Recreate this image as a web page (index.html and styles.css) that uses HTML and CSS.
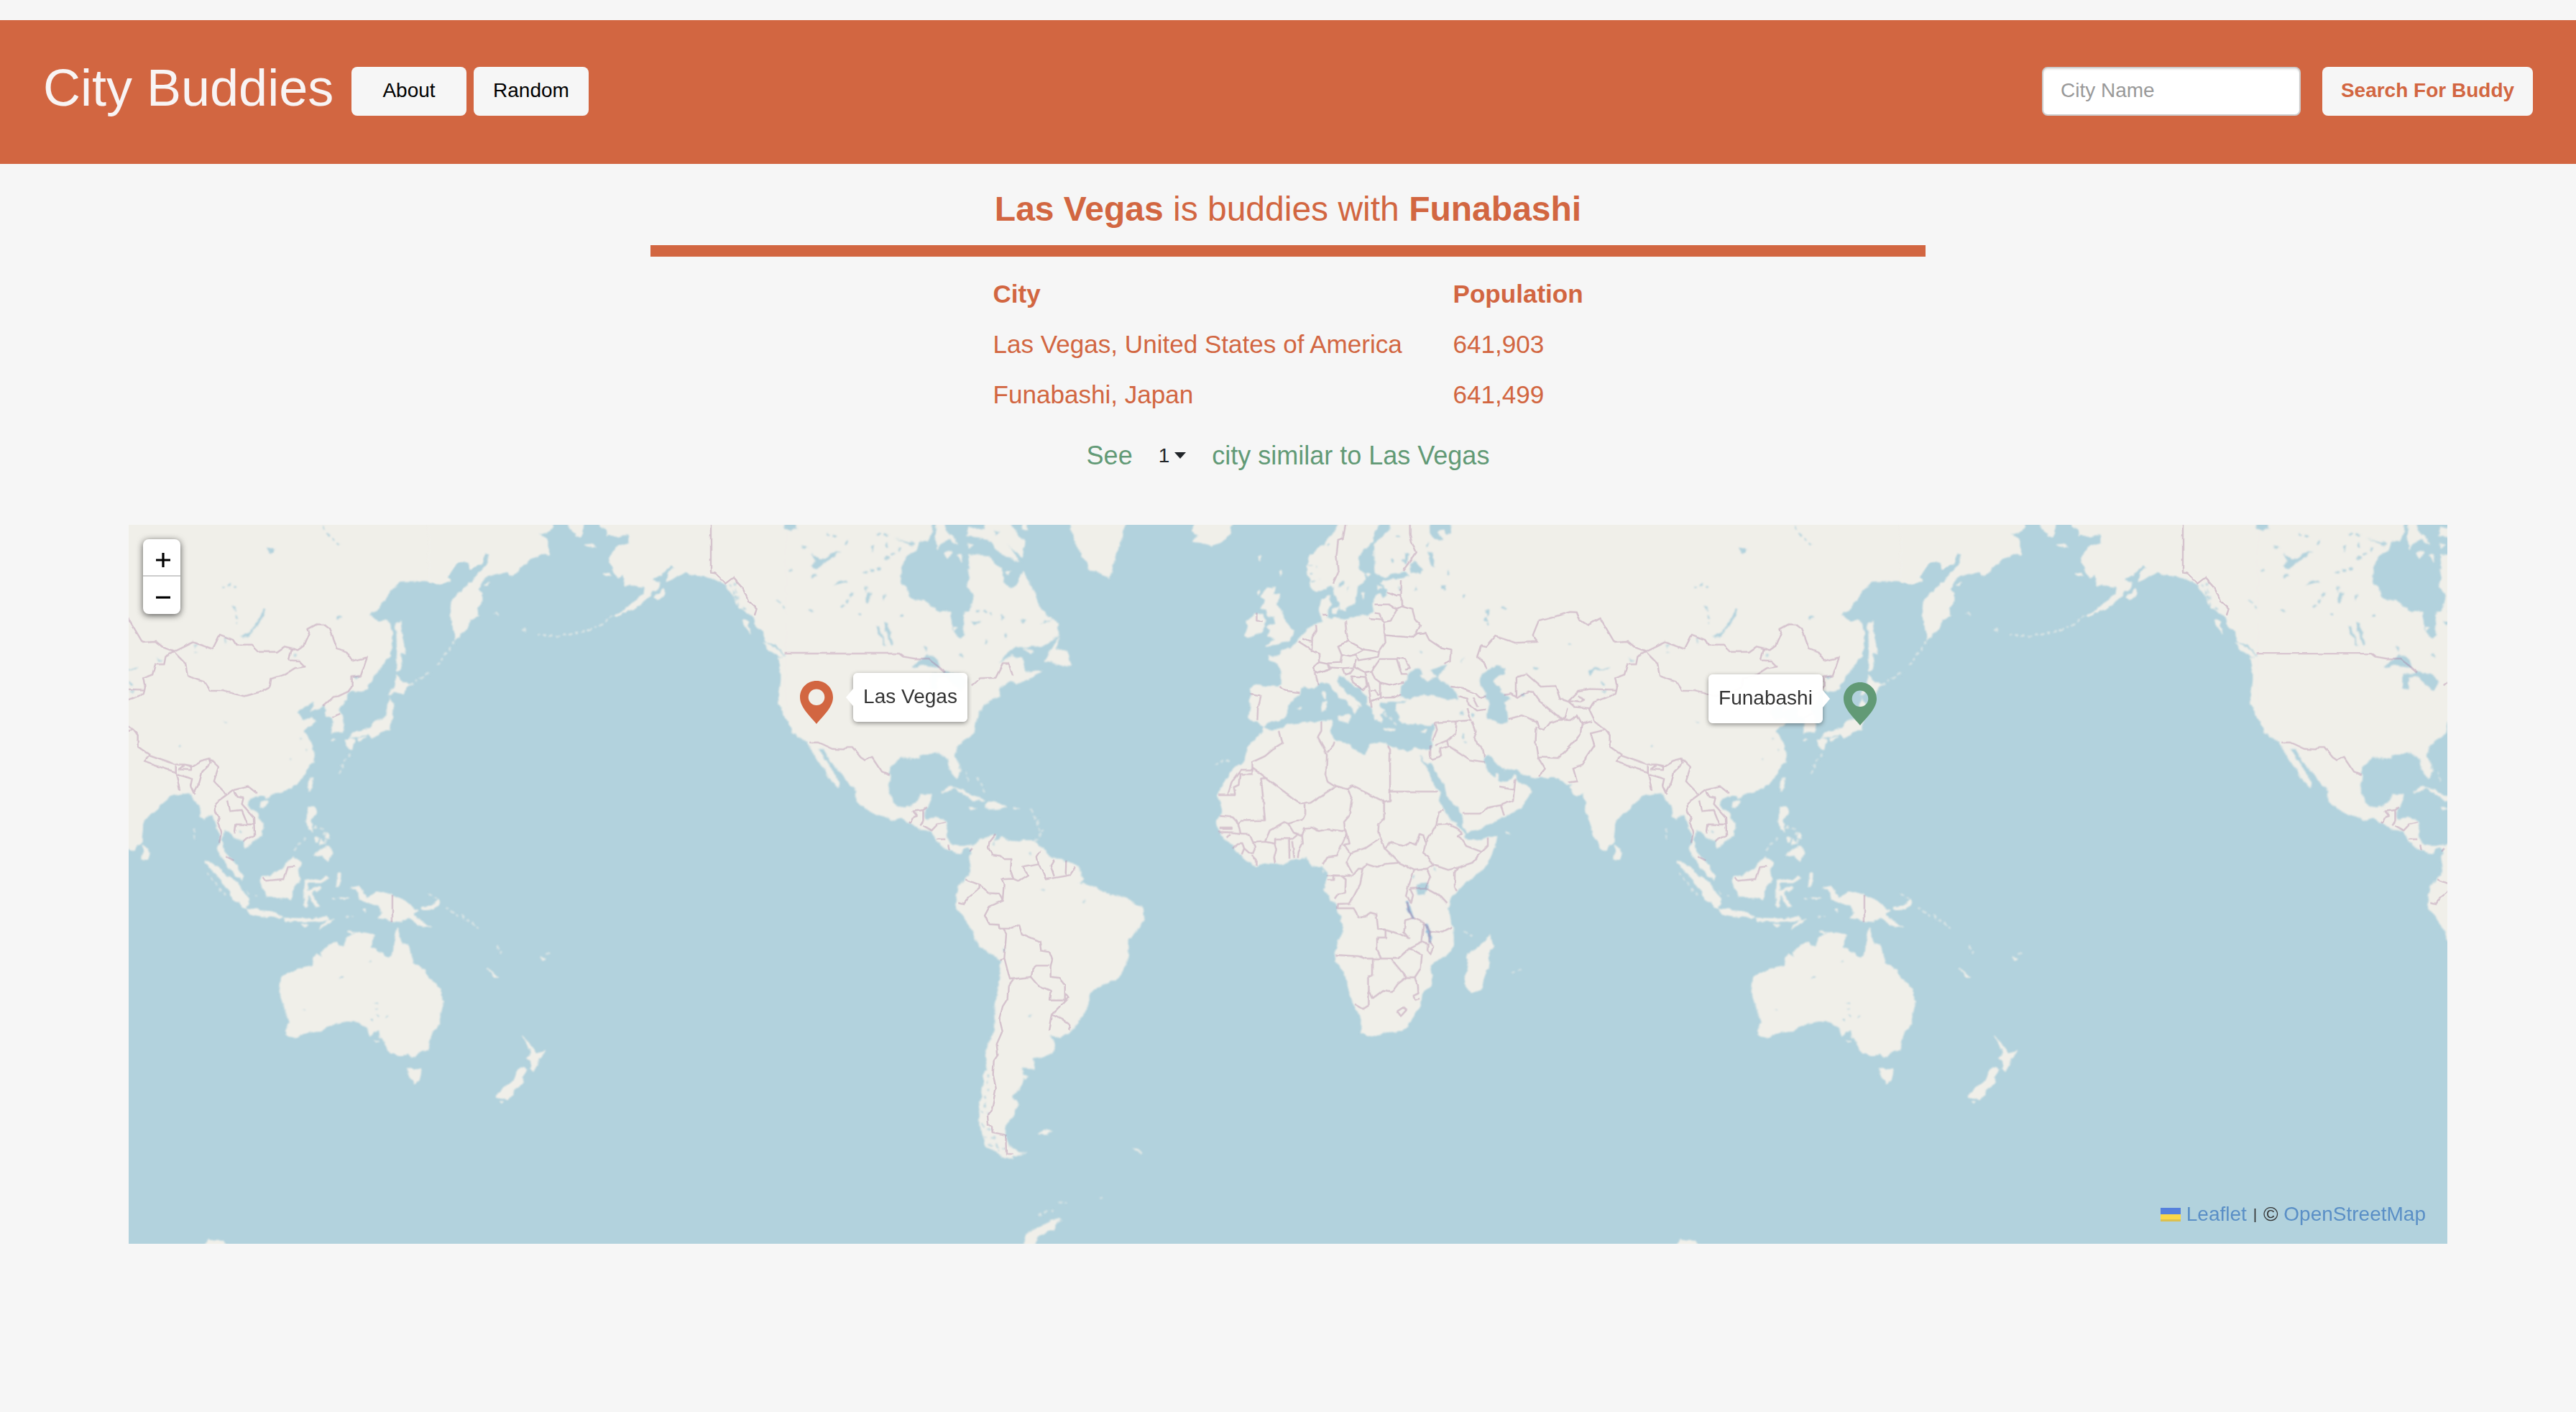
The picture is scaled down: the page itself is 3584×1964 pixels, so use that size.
FILE: index.html
```html
<!DOCTYPE html>
<html lang="en">
<head>
<meta charset="utf-8">
<title>City Buddies</title>
<link rel="stylesheet" href="styles.css">
</head>
<body>
<header class="navbar">
  <h1 class="brand">City Buddies</h1>
  <nav class="nav-buttons">
    <button class="btn">About</button>
    <button class="btn">Random</button>
  </nav>
  <form class="search">
    <input class="search-input" type="text" placeholder="City Name">
    <button class="btn btn-search" type="button">Search For Buddy</button>
  </form>
</header>
<main>
  <h2 class="headline"><b>Las Vegas</b> is buddies with <b>Funabashi</b></h2>
  <div class="rule"></div>
  <div class="cities">
    <b>City</b><b>Population</b>
    <span>Las Vegas, United States of America</span><span>641,903</span>
    <span>Funabashi, Japan</span><span>641,499</span>
  </div>
  <div class="similar">
    <span>See</span>
    <span class="count">1<svg class="caret" viewBox="0 0 16 9"><path d="M0 0H16L8 9Z"/></svg></span>
    <span>city similar to Las Vegas</span>
  </div>
  <section class="map">
    <svg class="tiles" viewBox="179 730 3226 1000">
      <defs>
        <filter id="coast" filterUnits="userSpaceOnUse" x="560" y="700" width="2300" height="1060">
          <feTurbulence type="fractalNoise" baseFrequency="0.09" numOctaves="3" seed="4"/>
          <feDisplacementMap in="SourceGraphic" scale="7" xChannelSelector="R" yChannelSelector="G"/>
          <feGaussianBlur stdDeviation="0.8"/>
        </filter>
        <filter id="line" filterUnits="userSpaceOnUse" x="560" y="700" width="2300" height="1060">
          <feTurbulence type="fractalNoise" baseFrequency="0.07" numOctaves="2" seed="9"/>
          <feDisplacementMap in="SourceGraphic" scale="4" xChannelSelector="R" yChannelSelector="G"/>
          <feGaussianBlur stdDeviation="0.5"/>
        </filter>
        <g id="world">
          <g filter="url(#coast)">
            <!-- Eastern Siberia and Alaska -->
            <g class="land" transform="translate(600 720) scale(.33333)">
              <path d="M-10 -20V262L30 275 75 262 60 250 85 215 110 180 160 180 165 215 210 185 218 150 245 152 228 200 200 230 150 290 105 325 88 350 83 400 90 450 100 510 130 480 158 440 165 420 195 410 190 375 212 360 212 315 195 300 215 250 265 235 320 225 335 245 400 185 455 148 490 158 490 130 475 85 440 65 480 68 510 45 518 -20Z"/>
              <path d="M565 -20 575 45 620 85 635 60 633 -20ZM700 -20 705 30 730 50 735 75 780 78 825 65 825 110 770 125 755 150 740 185 760 205 760 225 780 250 800 235 810 280 835 278 865 290 890 285 885 320 850 350 820 375 765 410 770 415 800 395 850 378 900 335 950 285 955 272 915 262 960 240 980 215 1000 200 1018 210 990 230 985 270 1020 250 1060 225 1110 240 1165 248 1210 270 1250 310 1280 360 1310 395 1345 410 1350 440 1385 480 1400 520 1440 530 1480 575 1445 590 1458 620 1458 690 1450 720 1452 780 1480 830 1520 900 1520 -20Z"/>
              <path d="M640 110 665 112 690 128 665 125ZM718 238 740 232 745 245ZM932 330 970 295 975 320 945 345ZM1300 428 1325 435 1322 460 1336 487 1310 455ZM1385 520 1440 545 1468 575 1455 580 1410 550ZM222 285 240 270 238 285Z"/>
              <path class="isles" d="M755 412 700 455 640 475 590 482 530 495 450 488M392 472 375 460M272 404 262 392M95 520 60 570 20 625"/>
            </g>
            <!-- North and Central America -->
            <g transform="translate(980 720) scale(.39541 .33333)">
              <g class="land">
                <path d="M290 -20V830L300 860 315 900 365 935 375 970 390 990 410 1030 440 1075 450 1105 475 1128 475 1105 450 1060 430 1020 415 1000 400 962 420 965 440 1010 480 1065 530 1130 535 1185 580 1220 620 1245 665 1260 695 1250 725 1275 755 1300 795 1305 820 1350 850 1385 870 1390 895 1402 925 1375 940 1400 960 1400 965 1385 940 1368 905 1368 870 1368 848 1330 850 1265 820 1255 775 1262 775 1230 785 1200 800 1155 765 1155 745 1190 720 1210 695 1212 665 1190 645 1140 648 1090 652 1040 690 1000 755 1003 755 990 785 983 835 985 860 1010 865 1050 890 1085 898 1055 880 990 890 950 945 900 955 840 985 780 1010 760 1040 745 1035 710 1085 680 1100 695 1130 680 1185 640 1165 640 1130 648 1120 590 1085 575 1040 610 1035 605 1060 570 1090 540 1190 535 1245 490 1245 445 1200 405 1165 350 1165 320 1150 290 1120 225 1105 280 1080 298 1050 270 1045 210 1020 195 1000 160 930 155 935 210 925 290 948 320 948 360 935 390 910 405 918 490 900 508 880 480 870 460 865 395 830 395 770 350 722 335 710 285 690 280 690 210 710 160 745 140 755 95 785 95 800 60 800 -20Z"/>
                <path d="M812 -20 815 80 820 125 840 100 865 90 890 110 880 90 850 60 850 -20ZM925 75 930 45 985 45 1000 -20 1075 -20 1085 50 1125 100 1118 165 1065 110 1108 180 1060 160 1025 130 1010 100 985 85ZM845 150 870 140 872 148 855 165ZM895 160 908 158 905 182ZM1115 -20 1140 50 1120 50ZM1280 -20 1300 80 1330 160 1360 215 1425 248 1440 180 1470 80 1485 -20ZM1245 500 1238 545 1280 570 1290 620 1250 610 1200 600 1225 545ZM1125 545 1160 560 1150 565ZM925 110 945 115 930 128Z"/>
                <path d="M838 1143 860 1125 900 1135 940 1155 985 1180 945 1182 920 1155 880 1132ZM1000 1190 1020 1185 1065 1207 1030 1215 985 1210ZM928 1210 955 1215 935 1222ZM1085 1210 1105 1213 1090 1217Z"/>
                <path class="isles" d="M920 1060 930 1100M960 1090 990 1150M1150 1220 1175 1280 1185 1320"/>
              </g>
              <g class="water">
                <path d="M728 625 750 600 780 573 815 580 830 625 790 618ZM795 655 850 645 900 650 925 690 900 720 870 690 850 660 820 665 815 720 795 715ZM375 150 410 175 440 155 482 138 470 150 430 185 395 212 375 205 392 185ZM280 50 295 -20 325 -20 325 45 300 55ZM455 285 470 265 500 260 505 268ZM630 435 645 440 662 530 655 530 640 480ZM600 450 612 450 640 535 632 530ZM565 290 572 300 565 315ZM575 310 588 315 575 360 565 350ZM625 325 638 320 630 350ZM585 125 600 120 595 145ZM770 540 785 540 780 560ZM345 115 362 125 352 130ZM670 85 740 110 735 118ZM1015 50 1035 60 1025 75ZM1065 110 1115 180 1120 190 1095 160ZM1112 425 1135 430 1120 445ZM1040 405 1055 415 1045 430ZM935 435 975 432 950 450ZM1185 445 1225 425 1195 432ZM1012 1345 1025 1355 1020 1375 1012 1365Z"/>
                <path class="lakes" d="M430 70 465 80M500 100V120M610 70 650 75M640 110V130M560 230 620 210M520 320 480 380M540 400 560 405M370 385 395 388M690 410 700 408M990 520 1000 505M900 575H905M1060 490V510M640 170 690 130M960 390 1010 400M300 220H310M380 240H390"/>
                <path class="lakes thin" d="M90 280 130 390M105 275 120 340M105 330 150 400M260 345 290 385"/>
              </g>
              <g class="land"><path d="M1060 225 1075 225 1068 240Z"/><path d="M875 455 890 462 880 468Z"/></g>
            </g>
            <!-- South America -->
            <g class="land" transform="translate(1260 1080) scale(.33333 .42092)">
              <path d="M268 262 275 238 305 212 345 200 375 188 365 210 385 212 400 203 430 212 500 215 540 215 560 232 580 245 620 275 660 278 715 295 740 340 725 355 765 360 800 370 835 390 910 397 940 412 960 425 990 432 998 465 980 490 960 510 930 540 928 590 910 640 880 672 830 680 765 715 765 750 730 800 710 820 680 850 640 860 598 848 625 885 610 915 575 928 535 928 530 965 485 962 490 1000 475 1035 440 1055 470 1085 455 1105 440 1130 415 1150 415 1190 440 1225 485 1248 440 1250 445 1265 400 1255 340 1220 310 1160 305 1100 320 1040 330 980 345 970 338 900 355 870 370 840 375 760 390 690 398 610 360 585 300 555 280 510 240 455 208 435 212 405 220 360 265 325 275 290Z"/>
              <path d="M555 1183 580 1170 605 1172 590 1182ZM950 1228 965 1230 982 1245ZM498 1580 500 1510 530 1500 560 1490 610 1468 650 1468 620 1480 620 1500 590 1500 545 1525 530 1580ZM490 990 508 992 500 1000Z"/>
              <path class="isles" d="M555 1450 610 1432M640 1408H670M810 1392H825M490 1246 505 1244M545 215 575 175"/>
              <path class="lakes thin" d="M345 985 345 1050M325 1060 335 1100M315 1110 345 1115M320 1150 350 1165M330 1190 370 1200M350 1215 410 1230M370 1190 390 1240M515 790H528M405 572 410 578M370 215V225M518 255H521M568 378H575M745 412H748"/>
            </g>
            <!-- Europe, Middle East, west Asia -->
            <g transform="translate(1660 720) scale(.33333)">
              <g class="land">
                <path d="M620 -20 605 30 580 75 545 115 520 130 485 165 478 200 480 240 490 260 490 285 520 308 545 300 575 275 585 290 590 325 605 345 612 385 635 388 640 370 670 360 680 330 685 295 715 260 715 240 690 215 688 170 715 130 750 100 758 60 775 30 780 -20 825 -20 822 50 800 70 755 115 757 200 765 235 790 245 850 232 880 222 908 240 870 255 830 258 795 262 785 275 805 295 808 325 795 340 780 320 760 328 750 360 755 395 735 412 700 405 640 428 600 422 560 425 555 400 575 365 572 325 535 345 532 395 545 435 505 445 475 470 460 495 435 512 410 540 365 555 362 575 315 578 320 592 355 610 370 650 370 700 355 707 255 700 238 712 243 735 240 790 232 840 245 850 270 848 295 872 315 855 355 852 385 830 395 815 390 785 425 750 445 735 450 705 485 712 520 700 540 685 565 695 585 725 630 760 665 790 672 820 690 790 675 775 705 785 700 775 645 735 615 705 600 680 610 655 640 665 660 690 700 720 725 745 725 775 745 800 760 820 760 845 790 855 795 845 775 820 800 810 775 790 780 770 830 765 855 768 885 760 845 780 850 810 860 840 900 860 935 862 985 868 1010 855 1010 880 1000 915 990 960 985 1015 1010 1055 1050 1110 1062 1175 1100 1200 1125 1240 1130 1280 1140 1310 1180 1305 1230 1285 1290 1250 1340 1230 1380 1195 1412 1140 1395 1120 1355 1105 1350 1080 1342 1078 1320 1102 1285 1105 1275 1095 1265 1065 1258 1090 1235 1060 1210 1015 1217 990 1240 988 1265 1020 1300 1052 1355 1052 1380 1072 1440 1085 1520 1083 1520 -20Z"/>
                <path d="M310 295 340 290 330 320 362 322 345 360 365 385 390 440 420 470 415 495 395 518 350 525 305 538 345 505 305 490 325 470 310 455 345 445 340 415 315 410 310 380 285 375 300 345 288 330ZM255 405 290 400 297 430 285 480 235 500 218 488 230 460 222 430 245 420ZM15 -20 160 -20 155 65 120 100 75 120 40 105 5 100 20 70 0 60ZM540 725 555 730 550 755 540 745ZM535 770 558 765 555 800 538 808ZM605 832 655 822 650 855 615 840ZM795 880 840 886 835 891 800 886ZM945 890 972 883 965 897ZM703 320 715 318 707 338ZM580 385 605 375 600 400 585 400ZM270 165 280 162 275 180ZM365 225 375 220 370 240ZM435 795 448 788 445 800ZM725 235 740 235 732 243ZM770 285 785 290 772 302ZM272 310 280 300 275 325Z"/>
                <path class="isles" d="M90 1025 160 1015M800 820 850 860"/>
              </g>
              <g class="water">
                <path d="M985 -20 1075 -20 1080 65 1060 75 1040 50 1018 55 1040 90 1025 100 1000 88 988 60ZM895 660 910 645 925 630 950 635 962 655 950 660 975 682 1000 670 1020 665 1060 695 1100 725 1105 750 1070 762 1010 745 970 740 930 745 900 757 868 745 870 705 890 680ZM985 640 1000 632 1062 615 1040 645 1025 668 1010 655ZM1235 635 1270 618 1298 625 1295 650 1270 665 1252 685 1280 705 1290 730 1325 760 1295 770 1310 800 1315 840 1300 858 1270 858 1228 835 1228 815 1238 780 1215 730 1195 680 1205 655ZM910 185 930 185 955 215 945 238 910 230ZM982 140 1000 150 1012 205 990 195 985 170ZM1035 275 1055 285 1050 305 1035 295ZM605 275 630 265 632 280 610 295ZM640 290 650 285 640 308ZM860 280 866 300 860 305ZM855 768 890 762 885 772 860 775ZM885 150 900 150 890 195 870 180 885 175ZM1115 600 1135 585 1120 605ZM940 555 960 562 950 566ZM1415 630 1440 628 1430 638Z"/>
                <path class="lakes" d="M830 175V195M848 78 860 85M980 105 970 125M1230 390 1220 430 1235 445M1060 225 1065 250M925 298H928M1130 325V335M1120 812 1130 818M1130 905 1140 935M1165 820 1170 840M1380 740 1370 750M935 1140 955 1115M1290 375H1300"/>
                <path class="lakes thin" d="M485 195 515 205M490 235 515 230M495 265 525 255M560 115 580 100"/>
              </g>
            </g>
            <!-- Africa -->
            <g transform="translate(1660 1000) scale(.33333)">
              <path class="land" d="M295 35 320 48 362 45 400 20 480 12 535 10 575 5 580 25 570 55 590 90 620 95 655 110 665 130 725 148 740 110 770 95 810 110 850 125 890 135 930 122 975 130 992 130 988 180 980 192 975 200 1000 270 1025 300 1030 345 1050 380 1065 420 1100 440 1135 480 1130 495 1150 508 1180 510 1230 495 1268 487 1260 530 1230 600 1180 650 1130 690 1100 720 1075 750 1060 790 1070 830 1085 875 1087 945 1070 975 1030 1000 990 1035 1000 1080 997 1110 955 1140 950 1190 920 1240 885 1290 850 1305 800 1310 735 1325 705 1305 705 1255 675 1190 655 1150 640 1080 600 1010 595 980 605 930 628 890 620 830 600 780 545 710 560 680 560 640 540 612 495 615 475 580 430 585 390 600 345 605 300 603 265 612 230 595 185 555 155 520 110 480 100 435 120 390 115 340 105 315 130 265 165 210 215 175 230 120 260 85 285 65ZM1235 900 1245 925 1252 950 1240 965 1235 1020 1215 1075 1200 1130 1165 1142 1140 1125 1133 1075 1150 1030 1145 980 1180 960 1215 930ZM1305 474 1320 476 1308 480Z"/>
              <path class="isles" d="M1335 1060 1375 1043M1135 890 1162 905M540 632V640"/>
              <path class="water" d="M945 155 952 155 985 195 980 205ZM935 695 970 685 985 695 960 735 935 730ZM915 655 925 650 918 668ZM1005 615 1018 640 1005 630Z"/>
              <path class="deep" d="M893 765 900 800 918 830M975 860 985 900 990 930"/>
            </g>
            <!-- Central Asia, India -->
            <g transform="translate(2060 720) scale(.40816 .33333)">
              <path class="land" d="M200 -20V1083L265 1082 290 1110 320 1110 302 1125 330 1165 355 1145 358 1200 385 1320 410 1380 425 1392 455 1350 460 1260 480 1240V-20Z"/>
              <path class="water" d="M365 640 385 628 440 626 442 632 390 635 372 660ZM405 728 430 725 425 735ZM500 580 520 595 510 600ZM730 848 745 850 738 858ZM470 630 485 645 478 645Z"/>
              <path class="lakes" d="M180 628 190 635M20 395 25 440M415 690 425 700M300 530H305M140 740H145M585 955 605 980M550 740H555"/>
            </g>
            <!-- East Asia -->
            <g transform="translate(2226 720) scale(.34439 .33333)">
              <g class="land">
                <path d="M40 -20V1330L60 1310 60 1260 110 1225 140 1190 175 1160 245 1145 265 1170 290 1205 295 1250 310 1257 340 1235 355 1280 375 1320 370 1360 360 1385 390 1430 405 1460 430 1490 462 1510 455 1480 440 1450 405 1420 380 1380 375 1345 390 1300 410 1310 430 1335 470 1350 470 1385 500 1350 540 1330 543 1280 520 1235 485 1205 490 1180 515 1155 555 1160 560 1175 590 1150 660 1130 705 1085 715 1055 745 1020 752 975 735 935 707 890 755 848 740 840 705 840 682 812 690 800 750 765 752 775 740 805 790 787 805 800 802 825 825 830 830 855 820 900 870 890 875 860 860 820 850 795 880 765 885 735 905 720 935 720 965 710 1010 640 1055 580 1070 490 1065 450 1040 425 1010 435 975 405 1000 390 1060 310 1095 265 1200 262 1250 275 1298 265 1285 250 1330 185 1375 180 1385 215 1430 185 1440 150 1440 -20Z"/>
                <path d="M745 1085 735 1143 722 1115ZM535 1190 568 1182 550 1210 532 1205ZM62 1365 88 1400 80 1425 58 1425ZM1085 655 1110 690 1138 700 1110 735 1075 725 1055 740 1060 715 1080 705ZM1060 755 1080 790 1065 830 1058 885 1035 885 985 920 975 905 930 910 895 920 920 890 975 880 1000 850 1045 830 1050 780ZM925 920 960 915 930 935ZM880 925 915 925 905 965 890 960ZM1085 440 1100 430 1108 500 1120 568 1098 560 1105 630 1085 640 1088 560ZM825 922 835 925 826 928Z"/>
              </g>
              <path class="isles" d="M1140 700 1220 645M895 985 850 1065M270 1300 265 1350"/>
              <path class="water" d="M543 380 553 382 548 420 510 465 480 500 452 498 490 480 535 420ZM385 848 402 855 392 858ZM392 505 402 500 395 525ZM262 530 278 530 270 542ZM845 415 865 410 848 430ZM112 582 135 598 120 598ZM415 370 435 375 425 385ZM910 662 935 662 922 675ZM670 570 680 565 675 580ZM560 120 595 130 575 155Z"/>
              <path class="lakes thin" d="M787 -20V40L815 75 860 115M380 290 415 278 437 290M435 380 440 440M695 925V928M655 1010V1012M720 965V968M205 957H210M450 1305 460 1310M270 560H280"/>
            </g>
            <!-- South-east Asia and Oceania -->
            <g transform="translate(2320 1100) scale(.35714 .33333)">
              <g class="land">
                <path d="M35 295 80 310 130 360 170 390 205 450 203 488 185 485 160 460 120 400 80 345ZM205 492 250 500 300 505 340 530 270 525 210 512ZM255 360 290 360 340 320 380 272 413 298 395 330 408 370 385 400 370 455 320 440 275 440 260 400ZM605 405 640 398 655 415 655 430 670 450 710 418 765 435 820 460 845 490 870 500 850 510 880 545 915 570 870 560 830 525 800 548 765 545 715 530 730 510 715 485 670 465 640 455 635 425ZM440 68 465 70 468 100 450 125 455 175 432 130ZM465 270 490 245 520 230 533 265 515 290 490 265ZM465 195 480 200 470 215ZM510 180 518 200 505 195ZM490 200 500 215 480 225Z"/>
                <path d="M785 575 805 635 825 640 850 720 890 745 905 785 920 790 955 830 963 900 950 960 920 1020 905 1083 875 1088 850 1112 825 1095 805 1108 750 1090 740 1045 720 1030 715 990 680 1022 670 990 650 970 610 958 540 970 510 980 490 1003 440 1005 395 1030 370 1025 350 1010 362 970 340 870 328 840 335 780 380 750 450 730 475 680 490 690 505 655 545 630 555 648 580 648 590 620 605 600 635 590 695 600 680 648 755 697 772 670 775 610ZM822 1155 850 1162 880 1158 870 1210 855 1220 838 1200ZM1272 1020 1300 1055 1312 1075 1330 1095 1360 1085 1340 1120 1315 1168 1303 1160 1305 1130 1290 1120 1308 1100 1300 1070ZM1265 1152 1292 1165 1272 1195 1272 1218 1240 1250 1220 1290 1172 1278 1185 1255 1215 1225 1245 1195ZM695 1043 715 1045 705 1048ZM595 585 620 588 600 592ZM1345 695 1362 698 1352 706ZM1135 742 1178 778 1170 778ZM485 572 505 548 540 537 505 560ZM415 553 440 560 425 562ZM530 445 545 450ZM560 443 600 447 580 450ZM655 490 663 490 658 505ZM1188 1295 1195 1300 1190 1303Z"/>
                <path class="island-line" d="M510 365 490 378 435 378 430 400 430 480M435 430 480 405M445 430 475 480M885 490 920 490 945 465M350 537 440 539 510 535M560 350 555 400"/>
                <path class="isles" d="M45 345 115 440M205 420 215 440M235 438H240M385 245 425 200M465 150 500 160M510 240 500 170M980 485 1020 525M1040 520 1100 575M910 430 950 460M1175 650 1190 675M1365 680 1385 673M590 525 615 520"/>
              </g>
              <path class="lakes thin" d="M565 783H575M700 888H706M706 910H710M710 938H712M685 960H688M678 715H680M420 911H422M745 938H748"/>
            </g>
            <path class="land" d="M2326 1740 2338 1726 2346 1730 2358 1727 2370 1740Z"/>
          </g>
          <g class="border" filter="url(#line)">
            <g transform="translate(600 720) scale(.33333)"><path d="M1167 -20V230L1185 232 1228 275 1260 250 1300 295 1325 350 1358 378 1350 405"/></g>
            <g transform="translate(980 720) scale(.39541 .33333)"><path d="M285 567H685L700 580 740 588 790 588 830 625 850 645M940 700 970 670 1025 668 1050 610 1072 610 1085 660M370 938 400 938 450 965 490 967 500 957 520 957 550 1000 565 1012 590 998 625 1060 652 1072M722 1278 735 1250 748 1245 735 1225 770 1220 770 1265 760 1285M770 1220 783 1208M770 1285 800 1305 820 1280 850 1272M820 1342H848M858 1365 862 1385M933 1392 943 1380"/></g>
            <g transform="translate(1260 1080) scale(.33333 .42092)"><path d="M375 190 350 215 345 235 360 258 395 262 410 273 442 273 438 310 450 338 400 340 410 355 405 410M450 338 470 345 510 325 490 300 555 290 548 265 565 245M555 290 570 310 585 340 690 325 710 300M620 275 605 295 620 330M670 278 668 325M250 340 305 357 345 385 390 387 405 410 350 430 330 460 350 488 388 490 392 505 430 505 475 490 485 520 560 545 565 575 600 580 612 605 605 630 605 662 640 665 665 690 665 740 600 740 605 708 555 690 525 662 530 635 545 625 600 625M305 357V370L260 400 245 420 220 415M408 505 420 520 412 600 395 605M412 600 435 670 495 665 525 662M450 672 428 695 425 735 405 760 390 805 402 845 380 885 385 920 368 940 365 985 377 1030 360 1100 342 1120 345 1150 360 1155 362 1178 418 1187 420 1247 450 1248M665 715 680 730 612 785 600 840M612 785 650 800 688 822 680 838"/></g>
            <g transform="translate(1660 720) scale(.33333)"><path d="M645 -20 625 90 605 95 598 160 605 230 585 275M905 -20V70L912 100 932 145 875 222M870 258 868 325 870 370M812 310 850 325 868 325M757 362 820 362 850 380 870 370 915 383 925 420 948 450 932 480M850 380 825 430 795 435 780 400 758 398M735 420 795 425M795 435 800 490 850 495 915 500 935 483 970 480 985 510 1030 540 1078 550 1075 600 1045 612M635 432 640 480 648 515 715 550 775 560 803 520 800 490M648 515 605 535 620 570 655 577 680 570 715 550M680 570 690 595 775 580 780 555M513 445 515 470 497 500 495 555 525 568 525 605M438 515 495 552M455 505 497 520M500 625 525 603 560 610 570 630 515 648ZM560 608 615 605 620 570M570 625 625 628 670 625 680 590M510 648 522 698M625 628 635 655 655 650 670 630M358 705 385 722 445 730M240 735 283 742 270 800 268 845M675 600V625L715 645 745 640 780 590 850 590 870 655 895 655M850 585 885 590 905 630 885 635M780 690 820 700 880 685M745 640 760 675 780 690 780 752M660 662 720 665 725 700 710 720 670 690ZM715 645 735 720 745 790M780 752 840 750 870 735M745 765 785 750M740 720 760 720 775 740M1075 705 1120 710 1180 735 1195 750 1222 745M1108 745 1145 755 1150 780 1185 805 1222 800M1170 750 1190 790M1145 795 1160 850M540 405H560M265 400V430L290 432"/></g>
            <g transform="translate(1660 1000) scale(.33333)"><path d="M360 50 373 103 330 130 300 155 247 180V230H195L190 275 170 285 175 315H105M247 212H200L160 265 145 313M247 205 450 355 490 350 597 280M310 248H283L288 290 300 423 200 425 188 435 165 410 115 405M188 435 198 478M105 472 160 473 200 478 235 480 250 515M110 453H158V459H110M155 480 140 495M168 540 185 520 205 518 213 540 203 565M213 540 235 560 250 560 258 540 250 515M245 570 265 590V612M250 515 300 512 340 520 347 545 338 580 342 602M300 512 320 465 380 430 397 437 420 475 440 480 415 500H342V520M400 500 402 580M413 510 422 580M455 490 458 520 440 555 437 580M468 357V395L455 420 397 437M420 475 455 490 465 455 495 453 525 468 560 460 620 468 635 460M597 280 645 293 665 335 655 400 630 430 635 470M535 10V50L520 75 548 125 558 150 555 235 565 260 597 280M590 95 585 110 560 140M645 293 665 280 797 345 822 340V130L812 115M822 303H1022M797 345V418L775 440 772 470 800 540M640 480 600 570 560 575 540 608M635 460 650 520 630 525 655 560 640 600 665 645M655 560 715 540 775 500M800 540 860 600M800 540 820 515 880 530 910 515 930 525 945 480 960 485 970 520 960 555 1005 610M560 652 665 655 690 625 710 625 725 605 770 620 800 605 860 600 920 628 975 625 1005 610 1065 630 1105 620 1165 600 1205 555 1230 530V495M1120 500 1140 530 1205 555M970 520 1015 440 1025 390 1048 380M1015 440 1060 437 1100 455 1125 480 1105 490 1120 500M1105 620 1092 640V700L1100 718M905 708 970 705 1035 740 1060 768M975 625 990 660 970 705M920 628 900 690 888 740 910 765 918 735 905 708M893 765 900 800 918 830 885 840 880 890 900 915 870 900 800 880 770 878M918 830 965 850 955 930M965 850 985 885 1040 890 1080 870M985 885V930L1002 950 990 980 978 965 980 940 955 930 905 955M620 655 637 670 635 725 605 730 590 750M560 672H585V655M710 625 697 690 670 740 650 770 605 772 603 790H670L690 825 720 822 740 808 765 815 772 878H803V912H768V965L785 1000M595 985 690 990 720 1000H855L905 955 955 985 950 1040 925 1078H890L825 1000M750 1000V1070H733V1195L710 1210 675 1190M733 1130 750 1165 790 1135 830 1140 855 1105 890 1078M925 1078 938 1110 940 1145 920 1155 925 1175 945 1170M855 1220 880 1203 893 1215 870 1240ZM1010 15 1100 10 1160 5M1100 10 1095 60 1060 90 1010 110M1010 15 1018 45 1000 90M1060 90 1065 110 1155 170 1215 180M1065 115 1030 125 1035 155 1000 167 985 160M990 110V165M1165 10 1180 50 1170 80 1210 130 1215 160M1125 395 1200 395 1230 370 1285 360 1335 340 1340 295 1280 285M1285 360 1298 400M1340 295 1345 250"/></g>
            <g transform="translate(2060 720) scale(.40816 .33333)"><path d="M20 632 12 605 -12 580 0 535 18 540 50 495 118 522 195 518 178 490 197 432 250 415 305 393 325 395 335 425 365 448 408 420 455 518 500 515 530 545 563 560 630 520 695 548 720 488 765 510 775 530 830 530 855 560 915 560 940 538 965 545 955 595 990 597 1010 622 975 628 940 655 895 672 890 705 860 725 803 745 730 723 685 722 665 685 610 660 603 610 563 560M965 545 985 553 1005 535 1025 480 1020 465 1050 445 1075 446 1095 465 1120 545 1150 560 1170 598 1222 583 1200 660 1170 665V705L1158 725 1124 745 1107 748 1073 785M1103 832 1130 818M563 560 535 580 530 612 500 612 490 655 458 670 465 705 460 735 385 770 370 800 390 850 425 885 440 910V955L480 990 570 1030 600 1030 622 1040 655 1015 685 1005 690 1025 660 1060 650 1105 630 1150M460 718 370 715 335 722 300 765 340 770 355 760 330 745M122 752V665L158 655 205 705 255 702 270 755 300 768 320 790 370 795M80 740 105 735 125 752 160 725 180 728 205 770 270 835 285 840 295 795M95 840 140 825 190 850 200 880 215 885 235 855 270 843 305 845 330 825 345 860 380 850M190 870 187 940 195 1000 265 1003 305 955 340 900 345 860M195 1000 220 1050 200 1080M425 885 375 900 388 950 345 1030 315 1045 328 1100 300 1105M480 990 460 1018 570 1062V1035M580 1050 600 1030 622 1035V1053ZM570 1062 575 1090 583 1140M575 1070 625 1090 620 1120 633 1155M690 1010 715 1040 700 1100 735 1145 745 1155 705 1190V1225L718 1250 712 1270 725 1310 718 1360M745 1155 765 1135 780 1165 800 1170 795 1195 835 1250 838 1325 800 1350M745 1180 752 1225 795 1220 815 1280H835M815 1283H775L770 1320M765 1135 815 1120 845 1150M740 1415 765 1430"/></g>
            <g transform="translate(2320 1100) scale(.35714 .33333)"><path d="M265 360 275 375 345 368 360 318 390 315M767 435V545"/></g>
          </g>
        </g>
      </defs>
      <use href="#world" x="-2048"/>
      <use href="#world"/>
      <use href="#world" x="2048"/>
    </svg>
    <div class="zoom-control">
      <a class="zoom-btn"><svg viewBox="0 0 20 20"><path d="M0 10H20M10 0V20"/></svg></a>
      <a class="zoom-btn"><svg viewBox="0 0 20 20"><path d="M0 10H20"/></svg></a>
    </div>
    <svg class="pin pin-vegas" viewBox="0 0 46 60"><path fill-rule="evenodd" d="M23 0C10 0 0 10 0 23C0 37 15 50 23 60C31 50 46 37 46 23C46 10 36 0 23 0ZM23 11.500A11.300 11.300 0 1 1 23 34.100A11.300 11.300 0 1 1 23 11.500Z"/></svg>
    <div class="tooltip tip-left">Las Vegas</div>
    <svg class="pin pin-funabashi" viewBox="0 0 46 60"><path fill-rule="evenodd" d="M23 0C10 0 0 10 0 23C0 37 15 50 23 60C31 50 46 37 46 23C46 10 36 0 23 0ZM23 11.500A11.300 11.300 0 1 1 23 34.100A11.300 11.300 0 1 1 23 11.500Z"/></svg>
    <div class="tooltip tip-right">Funabashi</div>
    <div class="attribution">
      <svg class="flag" viewBox="0 0 28 19"><path fill="#5580dc" d="M0 0H28V9H0Z"/><path fill="#fad749" d="M0 9H28V16H0Z"/><path fill="#dcc04f" d="M0 16H28V19H0Z"/></svg>
      <a>Leaflet</a> <span class="bar">|</span> © <a>OpenStreetMap</a>
    </div>
  </section>
</main>
</body>
</html>
```
FILE: styles.css
```css
* { box-sizing: border-box; }
body {
  margin: 0;
  background: #f6f6f6;
  font-family: "Liberation Sans", Arial, sans-serif;
  font-size: 28px;
}
.navbar {
  display: flex;
  align-items: flex-start;
  height: 200px;
  margin-top: 28px;
  padding: 65px 60px 0;
  background: #d26641;
}
.brand {
  width: 429px;
  margin: -7px 0 0;
  font-size: 72px;
  font-weight: 400;
  line-height: 72px;
  color: #f8f4f4;
  white-space: nowrap;
}
.nav-buttons { display: flex; gap: 10px; }
.btn {
  width: 160px;
  height: 68px;
  padding: 0 0 3px;
  border: 0;
  border-radius: 8px;
  background: #f6f6f6;
  font: 28px "Liberation Sans", Arial, sans-serif;
  color: #000;
}
.search { display: flex; gap: 30px; margin-left: auto; }
.search-input {
  width: 360px;
  height: 68px;
  padding: 0 24px 3px;
  border: 2px solid #ccc;
  border-radius: 8px;
  background: #fff;
  box-shadow: inset 0 2px 2px rgba(0, 0, 0, .075);
  font: 28px "Liberation Sans", Arial, sans-serif;
}
.search-input::placeholder { color: #999; opacity: 1; }
.btn-search { width: 293px; font-weight: 700; color: #d26641; }
.headline {
  margin: 36px 0 24px;
  font-size: 48px;
  font-weight: 400;
  line-height: 53px;
  text-align: center;
  color: #d26641;
}
.rule { width: 1774px; height: 16px; margin: 0 auto 17px; background: #d26641; }
.cities {
  display: grid;
  grid-template-columns: 640px 181px;
  justify-content: center;
  font-size: 35.1px;
  line-height: 70px;
  color: #d26641;
}
.similar {
  display: flex;
  justify-content: center;
  gap: 36px;
  margin: 15px 0 61px;
  font-size: 36px;
  line-height: 70px;
  color: #629a76;
}
.count {
  display: flex;
  align-items: center;
  gap: 7px;
  font-size: 28px;
  line-height: 68px;
  color: #212529;
}
.caret { width: 16px; height: 9px; margin-top: -2px; fill: #212529; }
.map {
  position: relative;
  width: 3226px;
  height: 1000px;
  margin: 0 auto;
  overflow: hidden;
  background: #b2d2dd;
}
.tiles { display: block; width: 3226px; height: 1000px; }
.land { fill: #f0efe9; }
.land path:not([class]), path.land { stroke: #f0efe9; stroke-width: 4px; stroke-linejoin: round; }
.water { fill: #b2d2dd; }
.isles, .island-line, .lakes, .deep { fill: none; stroke-linecap: round; vector-effect: non-scaling-stroke; }
.isles { stroke: #dbe5e5; stroke-width: 2.5; stroke-dasharray: 3 6; }
.island-line { stroke: #f0efe9; stroke-width: 5; }
.lakes { stroke: #b2d2dd; stroke-width: 3; stroke-dasharray: 3 7; }
.thin { stroke-width: 2; }
.deep { stroke: #94b9d8; stroke-width: 4; }
.border path {
  fill: none;
  stroke: #a878a0;
  stroke-opacity: .38;
  stroke-width: 2.4;
  stroke-linejoin: round;
  vector-effect: non-scaling-stroke;
}
.zoom-control {
  position: absolute;
  left: 20px;
  top: 20px;
  width: 52px;
  border-radius: 8px;
  background: #fff;
  box-shadow: 0 2px 10px rgba(0, 0, 0, .65);
}
.zoom-btn { display: flex; align-items: center; justify-content: center; height: 52px; padding: 6px 0 0 4px; }
.zoom-btn:first-child { border-bottom: 2px solid #ccc; padding-top: 8px; }
.zoom-btn svg { width: 20px; height: 20px; fill: none; stroke: #000; stroke-width: 3.2; }
.pin { position: absolute; width: 46px; height: 60px; }
.pin-vegas { left: 934px; top: 217px; fill: #d26641; }
.pin-funabashi { left: 2386px; top: 219px; fill: #629a76; }
.tooltip {
  position: absolute;
  width: 159px;
  height: 68px;
  padding-bottom: 3px;
  border-radius: 6px;
  background: rgba(255, 255, 255, .96);
  box-shadow: 0 2px 6px rgba(0, 0, 0, .4);
  line-height: 65px;
  text-align: center;
  color: #333;
}
.tooltip::before {
  content: "";
  position: absolute;
  top: 22px;
  border: 12px solid transparent;
}
.tip-left { left: 1008px; top: 206px; }
.tip-left::before { right: 100%; border-left: 0; border-right: 10px solid #fff; }
.tip-right { left: 2198px; top: 208px; }
.tip-right::before { left: 100%; border-right: 0; border-left: 10px solid #fff; }
.attribution {
  position: absolute;
  right: 30px;
  bottom: 18px;
  line-height: 42px;
  color: #333;
  white-space: nowrap;
}
.attribution a { color: #5a8fc6; }
.bar { position: relative; top: -2px; margin: 0 1px; font-size: 21px; }
.flag { width: 28px; height: 19px; vertical-align: -1px; }
```
